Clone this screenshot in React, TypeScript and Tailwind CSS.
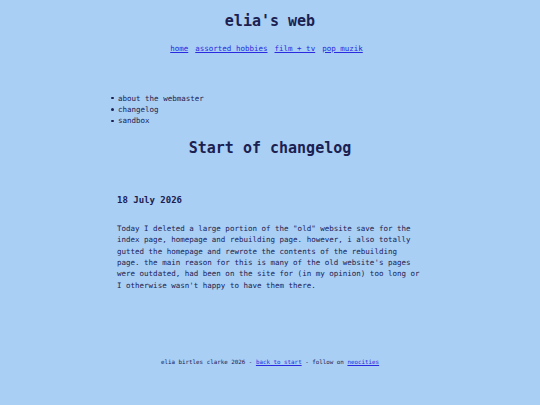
const navLinks = ['home', 'assorted hobbies', 'film + tv', 'pop muzik'];
const pages = ['about the webmaster', 'changelog', 'sandbox'];

export default function App() {
  return (
    <div className="min-h-screen bg-[#a9cff5] text-[#1b2050] font-['DejaVu_Sans_Mono',monospace]">
      {/* header */}
      <header className="pt-[12px] text-center">
        <h1 className="text-[15px] leading-[18px] font-bold">elia's web</h1>
        <nav className="mt-[12.5px] flex justify-center gap-[7px] pr-[7px] text-[7.5px] leading-[11px]">
          {navLinks.map((l) => (
            <a key={l} href="#" className="text-[#2a2ae0] underline">
              {l}
            </a>
          ))}
        </nav>
      </header>

      <main className="mx-auto w-[306px]">
        <ul className="mt-[39px] -ml-[6px] text-[7.5px] leading-[11.34px]">
          {pages.map((p) => (
            <li key={p} className="flex items-center">
              <span className="w-[7px] shrink-0">
                <span className="block h-[2.5px] w-[2.5px] rounded-full bg-[#1b2050]" />
              </span>
              {p}
            </li>
          ))}
        </ul>

        <h2 className="mt-[12.5px] text-center text-[15px] leading-[18px] font-bold">
          Start of changelog
        </h2>

        <h3 className="mt-[37.5px] text-[9px] leading-[11px] font-bold">18 July 2026</h3>

        <p className="mt-[17.5px] text-[7.5px] leading-[11.34px]">
          Today I deleted a large portion of the "old" website save for the index page, homepage
          and rebuilding page. however, i also totally gutted the homepage and rewrote the contents
          of the rebuilding page. the main reason for this is many of the old website's pages were
          outdated, had been on the site for (in my opinion) too long or I otherwise wasn't happy
          to have them there.
        </p>
      </main>

      <footer className="mt-[66.5px] pb-[20px] text-center text-[5.85px] leading-[9px]">
        elia birtles clarke 2026 -{' '}
        <a href="#" className="text-[#2a2ae0] underline">
          back to start
        </a>{' '}
        - follow on{' '}
        <a href="#" className="text-[#2a2ae0] underline">
          neocities
        </a>
      </footer>
    </div>
  );
}
